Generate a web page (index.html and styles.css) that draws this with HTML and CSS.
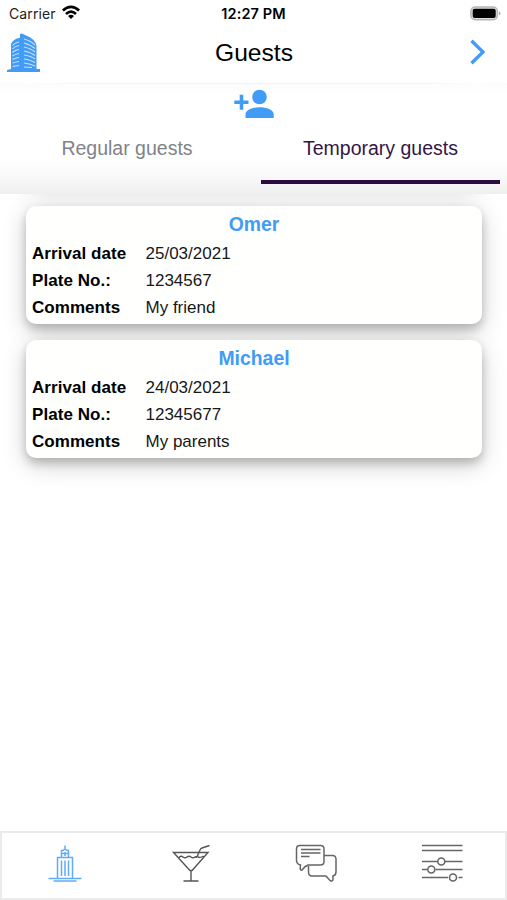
FILE: index.html
```html
<!DOCTYPE html>
<html lang="en">
<head>
<meta charset="utf-8">
<title>Guests</title>
<link rel="stylesheet" href="styles.css">
</head>
<body>
<div class="app">
  <div class="status">
    <div class="carrier"><span>Carrier</span>
      <svg width="20" height="16" viewBox="0 0 20 16" fill="none" stroke="#000" stroke-width="2.7"><path d="M1.900 6.600Q10 -.8 18.100 6.600M5 9.900Q10 5.300 15 9.900"/><path d="M10 15L7 11.900Q10 9.400 13 11.900Z" fill="#000" stroke="none"/></svg>
    </div>
    <div class="time">12:27 PM</div>
    <div class="battery">
      <svg width="31" height="15" viewBox="0 0 31 15"><rect x=".9" y=".9" width="26.500" height="12.900" rx="4.300" fill="#ddd" stroke="#b5b5b5" stroke-width="1.500"/><rect x="2.700" y="2.700" width="23" height="9.300" rx="2"/><path d="M29 5.200q3 2.200 0 4.400z" fill="#aaa"/></svg>
    </div>
  </div>
  <header class="header">
    <svg class="logo" width="34" height="40" viewBox="0 0 34 40"><path d="M4 36V11Q6 6 13 4.800V1Q14.500 0 17 1.400Q29 6 29.500 13V36H33V39H0V37L4 36Z" fill="#429bf5"/><path d="M5.500 12.500Q8 9.500 12 9M5.500 16Q8 13 12 12.500M5.500 19.500Q8 17 12 16.500M5.500 23Q8 21 12 20.500M5.500 26.500Q8 25 12 24.500M5.500 30Q8 29 12 28.500M5.500 33.500Q8 33 12 32.500M17 6Q24 8 28 12M17 10Q24 12 28 15.500M17 14Q24 15.500 28 19M17 18Q24 19.500 28 22.500M17 22Q24 23 28 26M17 26Q24 27 28 29.500M17 30Q24 31 28 33M17 34L25 34.500" fill="none" stroke="#c9e1ff" stroke-width="1.100"/></svg>
    <h1>Guests</h1>
    <svg class="chevron" width="16" height="26" viewBox="0 0 16 26" fill="none" stroke="#429bf5" stroke-width="3.300"><path d="M1.500 1.700L13 13L1.500 24.300"/></svg>
  </header>
  <div class="tabs-area">
    <div class="add">
      <svg width="40" height="30" viewBox="0 0 40 30" fill="#429bf5"><circle cx="25.500" cy="8" r="7.300"/><path d="M11.500 29V25.500C11.500 20.500 19 18.300 25.600 18.300S39.700 20.500 39.700 25.500V29ZM5.700 5.700H9.300V11.500H14.500V15H9.300V20.800H5.700V15H.3V11.500H5.700Z"/></svg>
    </div>
    <nav class="tabs">
      <div class="tab">Regular guests</div>
      <div class="tab active">Temporary guests</div>
    </nav>
  </div>
  <main class="list">
    <section class="card">
      <h2>Omer</h2>
      <dl><dt>Arrival date</dt><dd>25/03/2021</dd><dt>Plate No.:</dt><dd>1234567</dd><dt>Comments</dt><dd>My friend</dd></dl>
    </section>
    <section class="card">
      <h2>Michael</h2>
      <dl><dt>Arrival date</dt><dd>24/03/2021</dd><dt>Plate No.:</dt><dd>12345677</dd><dt>Comments</dt><dd>My parents</dd></dl>
    </section>
  </main>
  <footer class="bottom">
    <div class="item"><svg width="44" height="44" viewBox="0 0 44 44" fill="none" stroke="#62abf5" stroke-width="1.500"><path d="M22 3.500V7M18.500 15V8.500H20L22 7L24 8.500H25.500V15M18.500 11.500H25.500M22 10V14M14.500 36V15.500H29.500V36M18.500 18.500V34M22 18.500V34M25.500 18.500V34M5.500 36.500H38.500M10.500 39H33.500"/></svg></div>
    <div class="item"><svg width="44" height="44" viewBox="0 0 44 44" fill="none" stroke="#555" stroke-width="1.400"><path d="M4.500 10.500H39L24 27.500Q22 30 20 27.500L4.500 10.500ZM22 29V39M14.500 39H29.500M9.500 16Q12 13 14 15Q16 16.500 18 15Q20 13.500 22 15Q24 16.500 26 15L28 14.500M29 15Q32 16 34.500 14M27.500 16L31 8Q31.500 6.500 33 6L40.500 3.500"/></svg></div>
    <div class="item"><svg width="44" height="44" viewBox="0 0 44 44" fill="none" stroke="#666" stroke-width="1.500"><path d="M5.500 3.500H26.500Q30 3.500 30 7V19.500Q30 23 26.500 23H14Q11 24 8 28Q5.500 29 6.500 23Q2.500 22 2.500 18.500V7Q2.500 3.500 5.500 3.500ZM30.500 13.500H38.500Q42 13.500 42 17.500V30Q42 33.500 39 34V37Q39 40 36 38.500L32 34H18Q14.500 34 14.500 30V24M7 7.500H26.500M7 11H26.500M7 14.500H15.500"/></svg></div>
    <div class="item"><svg width="44" height="44" viewBox="0 0 44 44" fill="none" stroke="#666" stroke-width="1.600"><path d="M2 3.500H42.500M2 8.500H42.500M2 19.500H17M25 19.500H42.500M2 27.500H7M15.500 27.500H42.500M2 35.500H28M38.500 35.500H42.500"/><circle cx="21.300" cy="19.500" r="3.500"/><circle cx="11.300" cy="27.500" r="3.500"/><circle cx="33" cy="35.500" r="3.500"/></svg></div>
  </footer>
</div>
</body>
</html>
```
FILE: styles.css
```css
* { box-sizing: border-box; }
body { margin: 0; background: #fff; color: #000; font-family: "Liberation Sans", Arial, sans-serif; }
svg { display: block; }
.app { height: 900px; display: flex; flex-direction: column; overflow: hidden; }
.status {
  height: 27px; display: grid; grid-template-columns: 1fr auto 1fr; align-items: center;
  padding: 0 6px; font-family: Inter, sans-serif; font-size: 14px;
}
.carrier { display: flex; gap: 5px; align-items: center; color: #222; letter-spacing: .1px; padding-left: 3px; }
.carrier svg { margin-top: -3px; }
.time { font-weight: 600; font-size: 14.5px; letter-spacing: .1px; }
.battery { display: flex; justify-content: flex-end; }
.header {
  height: 56px; display: grid; grid-template-columns: 40px 1fr 40px; align-items: center;
  padding: 0 21px 0 7px;
}
.header h1 { margin: -4px 0 0 15px; font-weight: 400; font-size: 24.6px; text-align: center; }
.logo { margin-top: -4px; }
.chevron { justify-self: end; margin-top: -7px; }
.tabs-area {
  height: 111px; position: relative; z-index: 1;
  background: linear-gradient(#fcfcfc 0, #fff 12px, #fff 75px, #f8f8f8 95px, #efefef 111px);
}
.tabs-area::before {
  content: ""; display: block; height: 1px; margin: 0 24px;
  background: linear-gradient(90deg, #fff, #f4f4f4 12%, #f4f4f4 88%, #fff);
}
.add { height: 38px; display: flex; justify-content: center; padding: 5px 0 0 1px; }
.tabs { display: grid; grid-template-columns: 1fr 1fr; height: 62px; padding: 0 7px; gap: 15px; }
.tab {
  display: flex; justify-content: center; padding-top: 15px; font-size: 19.5px; line-height: 22px;
  color: #808388; border-bottom: 4px solid transparent;
}
.tab:first-child { padding-left: 1px; }
.tab.active { color: #341646; border-color: #2d0c40; }
.list {
  flex: 1; display: flex; flex-direction: column; gap: 16.5px; padding: 12px 25px 0 26px;
  background:
    linear-gradient(90deg, #fff 14px, #fff0 50px, #fff0 calc(100% - 50px), #fff calc(100% - 14px)),
    linear-gradient(#efefef, #f7f7f7 6px, #fff 24px);
}
.card {
  height: 117.5px; border-radius: 10px; background: #fffffe; padding: 6px 6px 0;
  box-shadow: 0 5px 10px rgba(0,0,0,.2), 0 7px 24px rgba(0,0,0,.19);
}
.card h2 { margin: 0; font-size: 19.4px; line-height: 24px; color: #429bf5; text-align: center; }
.card dl { margin: 3.5px 0 0; display: grid; grid-template-columns: 113.5px 1fr; font-size: 17px; line-height: 27px; }
.card dt { font-weight: 700; letter-spacing: .05px; }
.card dd { margin: 0; color: #181818; }
.bottom {
  height: 69px; border: 2px solid #ebebeb; display: grid; grid-template-columns: repeat(4, 1fr);
  justify-items: center; padding-top: 9px;
}
```
